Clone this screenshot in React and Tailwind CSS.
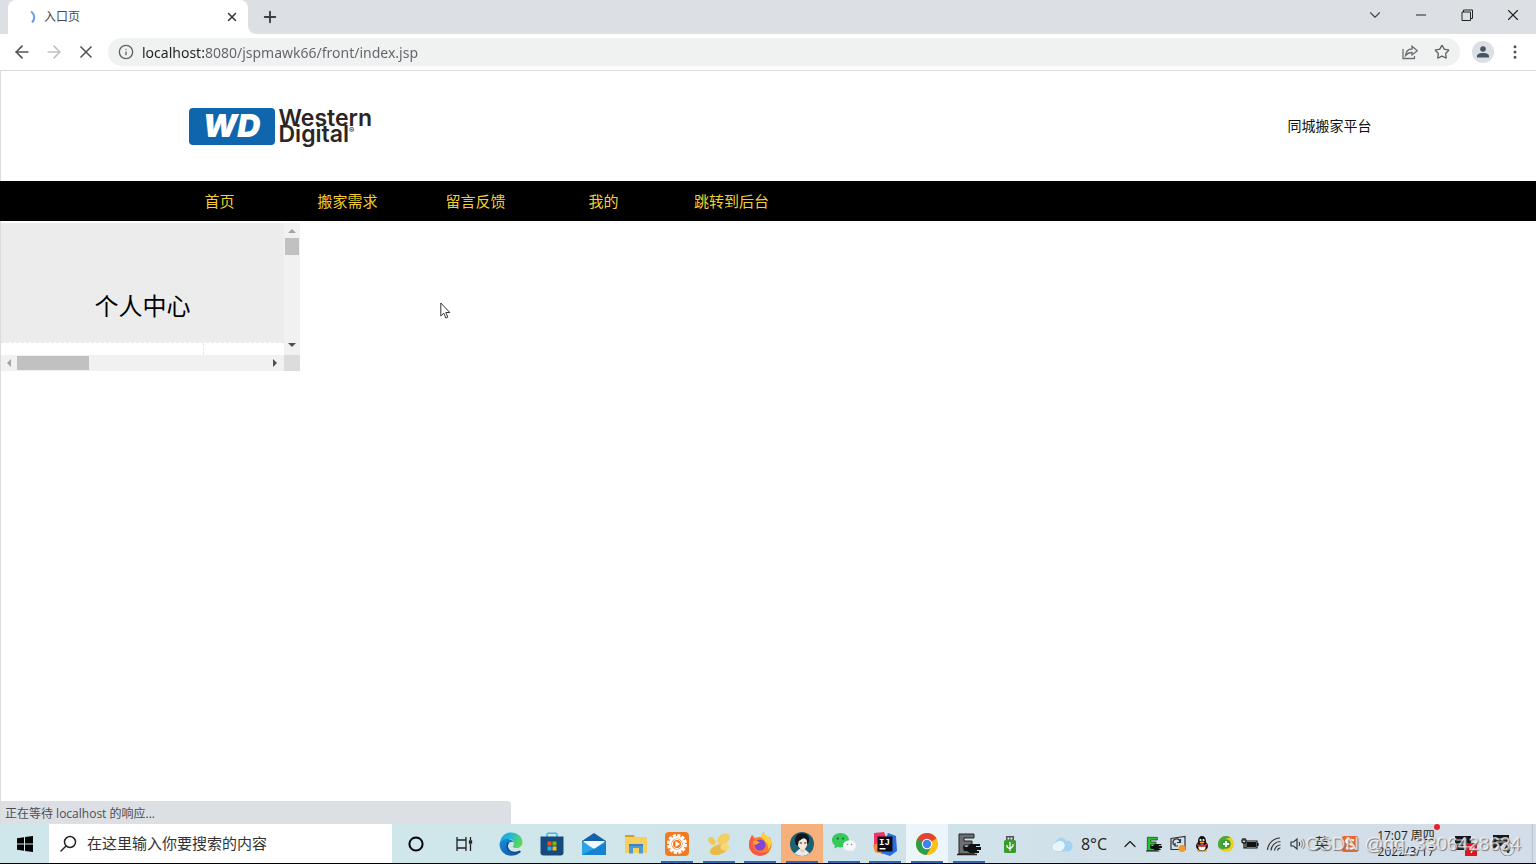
import { ArrowLeft, ArrowRight, X, Info, Star, Plus, Minus, ChevronDown, ChevronUp, EllipsisVertical } from 'lucide-react';

const NAV_ITEMS = ['首页', '搬家需求', '留言反馈', '我的', '跳转到后台'];

function EdgeIcon() {
  return (
    <svg viewBox="0 0 24 24" className="w-6 h-6">
      <defs>
        <linearGradient id="edgeTop" x1="0" y1="0" x2="1" y2="0.4">
          <stop offset="0" stopColor="#1a9fe0" />
          <stop offset="0.5" stopColor="#22b9d6" />
          <stop offset="1" stopColor="#5fd65a" />
        </linearGradient>
        <linearGradient id="edgeBottom" x1="0" y1="0" x2="1" y2="1">
          <stop offset="0" stopColor="#1b8fdc" />
          <stop offset="1" stopColor="#0f4f9e" />
        </linearGradient>
      </defs>
      <path d="M1 11C1.500 5 6 0.500 12 0.500c6.500 0 11.500 4.500 11.500 9.500 0 4-3 6-6 6-2.500 0-3.800-.8-3.800-1.600 0-.7 1.300-1 1.300-3C15 9 12.500 7 9.500 7 5 7 2 9 1 11z" fill="url(#edgeTop)" />
      <path d="M.5 12C1 9 4.500 7 8 7c3.500 0 6 1.500 6.500 3.500-4-1.500-6 1.500-5.500 4.500.6 3.500 4.500 6 8.500 5.200 2-.4 3.500-1.200 4-1.200.8 0 .3 1-.5 1.700C18.500 22.700 15.500 23.700 12 23.700 5.500 23.700.5 18.500.5 12z" fill="url(#edgeBottom)" />
      <path d="M9.500 10.800C7 13 8 19 14 20.300c3 .6 5.800-.6 7-1.100" fill="none" stroke="#134a8e" strokeWidth="1.500" />
    </svg>
  );
}

function StoreIcon() {
  return (
    <svg viewBox="0 0 24 24" className="w-6 h-6">
      <path d="M7 5V2.500Q7 1.200 8.500 1.200H15.500Q17 1.200 17 2.500V5" fill="none" stroke="#3fb4e8" strokeWidth="1.500" />
      <path d="M.5 4.500H23.500V20.500Q23.500 23.500 20.500 23.500H3.500Q.5 23.500.5 20.500z" fill="#174a7c" />
      <path d="M7.500 9.500h4v4h-4z" fill="#f25022" />
      <path d="M12.500 9.500h4v4h-4z" fill="#7fba00" />
      <path d="M7.500 14.500h4v4h-4z" fill="#2ea9f0" />
      <path d="M12.500 14.500h4v4h-4z" fill="#ffb900" />
    </svg>
  );
}

function MailIcon() {
  return (
    <svg viewBox="0 0 24 24" className="w-6 h-6">
      <path d="M0 9L12 1l12 8v4H0z" fill="#1560a8" />
      <path d="M0 9.500l12 6.500 12-6.500V23H0z" fill="#2aa4e6" />
      <path d="M0 23l24-13v13z" fill="#1683d2" />
      <path d="M1.500 9h21v1l-9 6q-1.500 1-3 0l-9-6z" fill="#eefaff" />
    </svg>
  );
}

function FolderIcon() {
  return (
    <svg viewBox="0 0 24 24" className="w-6 h-6">
      <path d="M1 3h8.500l2 2.500H1z" fill="#d79b22" />
      <path d="M1 5h22v16H1z" fill="#f7cf5f" />
      <path d="M5 12h14v9.500h-4V16H9v5.500H5z" fill="#4c9bd6" />
      <path d="M5 12h14v2H5z" fill="#3b82c0" />
    </svg>
  );
}

function SunAppIcon() {
  return (
    <svg viewBox="0 0 24 24" className="w-6 h-6">
      <rect width="24" height="24" rx="4" fill="#f47a1f" />
      <circle cx="12" cy="12" r="8.800" fill="none" stroke="#fff" strokeWidth="2.400" strokeDasharray="3.200 1.400" />
      <circle cx="12" cy="12" r="6.800" fill="none" stroke="#fff" strokeWidth="2.400" />
      <circle cx="12" cy="12" r="4.600" fill="none" stroke="#fff" />
      <path d="M10.500 9l4.500 3-4.500 3z" fill="#fff" />
    </svg>
  );
}

function GoldIcon() {
  return (
    <svg viewBox="0 0 24 24" className="w-6 h-6">
      <ellipse cx="5" cy="9" rx="4.500" ry="3" transform="rotate(50 5 9)" fill="#efc858" />
      <ellipse cx="16.500" cy="7" rx="7" ry="5" transform="rotate(-35 16.500 7)" fill="#f3cf63" />
      <ellipse cx="12" cy="17.500" rx="9.500" ry="5" transform="rotate(-18 12 17.500)" fill="#e8bb48" />
      <ellipse cx="18" cy="15" rx="4.500" ry="3.500" fill="#f6d878" />
    </svg>
  );
}

function FirefoxIcon() {
  return (
    <svg viewBox="0 0 24 24" className="w-6 h-6">
      <path d="M1 13C1 8 3 6 4 3l3 3c2-1 4-1 6-1 0-2 1-3.500 3-5 0 3 3 4 5 6l.5-1.500C23 7 23.500 10 23.500 13c0 6-5 10.700-11.300 10.700S1 19 1 13z" fill="#ff7b2e" />
      <path d="M13 5c0-2 1-3.500 3-5 0 3 3 4 5 6l.5-1.500C23.500 8 24 14 20 18c1-6-3-9-7-13z" fill="#ffd23c" />
      <path d="M1 13c0 6 5 10.700 11.200 10.700 4 0 7.500-2 9.500-5-6 4-16 2-17-6-.3-2 .3-4 1-5L4 3C3 6 1 8 1 13z" fill="#f9574a" />
      <circle cx="12" cy="13" r="5.500" fill="#8146d8" />
      <path d="M5 9c3-1 5 0 7 2-2 0-3 1-4 2-2-1-3-2-3-4z" fill="#ffa52e" />
    </svg>
  );
}

function AvatarIcon() {
  return (
    <svg viewBox="0 0 24 24" className="w-6 h-6">
      <circle cx="12" cy="12" r="12" fill="#1b6173" />
      <path d="M4.500 21.300l5-4.300h5l5 4.300A12 12 0 0 1 4.500 21.300z" fill="#dff0f3" />
      <path d="M10 14h5v4.500L12.500 21 10 18.500z" fill="#e8cdbd" />
      <path d="M7.500 6.500h10V12q-1.500 5-4.500 6-4.500-1.500-5.500-6z" fill="#f8e5d9" />
      <path d="M5.500 12C3.500 5 7 1.500 12 1.200c6 0 8.500 4 6.500 9.300L17.300 13l-.6-5L14 5.500 10.500 8l-1.700 1L7.800 14z" fill="#11161c" />
      <path d="M9.800 11h2M14.300 11h2" stroke="#11161c" />
    </svg>
  );
}

function WechatIcon() {
  return (
    <svg viewBox="0 0 24 24" className="w-6 h-6">
      <path d="M8.500 1C3.800 1 0 4 0 8.200c0 2 1 3.700 2.700 5L2.500 16.500l3-1.500c6 1.500 11.500-1.500 11.500-7C17 4 13 1 8.500 1z" fill="#37c95b" />
      <ellipse cx="17.500" cy="13.500" rx="6.500" ry="5.300" fill="#f5f8f8" />
      <path d="M20 17.500l2 3-.3-4z" fill="#f5f8f8" />
      <circle cx="5.800" cy="6.500" r="1" fill="#14632a" />
      <circle cx="11" cy="6.500" r="1" fill="#14632a" />
      <circle cx="15.500" cy="12.500" r=".8" fill="#888" />
      <circle cx="19.500" cy="12.500" r=".8" fill="#888" />
    </svg>
  );
}

function IdeaIcon() {
  return (
    <svg viewBox="0 0 24 24" className="w-6 h-6">
      <path d="M1 1l10-1 4 10-8 10-6-5z" fill="#f0356b" />
      <path d="M0 13l8-3 2 12-8-2z" fill="#f58a3a" />
      <path d="M15 1l8 3 1 15-7 5-9-3z" fill="#2b6be4" />
      <rect x="4.500" y="4.500" width="15" height="15" fill="#0b0b0d" />
      <text x="6" y="12.500" fontSize="9" fontWeight="700" fontFamily="Liberation Mono, monospace" fill="#fff">IJ</text>
      <path d="M6.500 16h6v1.500h-6z" fill="#fff" />
    </svg>
  );
}

function ChromeIcon() {
  return (
    <svg viewBox="0 0 24 24" className="w-6 h-6">
      <circle cx="12" cy="12" r="11" fill="#fbc116" />
      <path d="M12 12L2.500 6.500A11 11 0 0 1 21.500 6.500z" fill="#df4435" />
      <path d="M2.500 6.500A11 11 0 0 0 11.500 23L16.500 14.600 12 12z" fill="#2a9d4e" />
      <path d="M2.500 6.500L7.500 14.500 12 6.500z" fill="#df4435" />
      <path d="M2.500 6.500L7.300 14.700 12 12z" fill="#2a9d4e" />
      <circle cx="12" cy="12" r="5.200" fill="#fff" />
      <circle cx="12" cy="12" r="4.200" fill="#3f83ee" />
    </svg>
  );
}

function RecorderIcon({ color = '#6b6f73', className = 'w-6 h-6' }) {
  return (
    <svg viewBox="0 0 24 24" className={className}>
      <path d="M2 2h15v4H7v3h8v4H7v5h10v4H2z" fill={color} stroke="#222" />
      <path d="M0 22.500h20" stroke="#222" strokeWidth="1.500" />
      <path d="M6 14l4 1 3-3h10v2h-4v1h5v3h-4v1h2v2h-9l-3-2H7z" fill="#111" />
    </svg>
  );
}

function UsbIcon() {
  return (
    <svg viewBox="0 0 24 24" className="w-6 h-6">
      <path d="M8 4h8v5H8z" fill="#4b5358" />
      <path d="M9.500 5.500h2v2h-2zM12.500 5.500h2v2h-2z" fill="#e5e9eb" />
      <rect x="6" y="8" width="12" height="13" rx="1.500" fill="#3b9a2c" />
      <path d="M12 10v9M9 13v2l3 2 3-3v-2" fill="none" stroke="#fff" strokeWidth="1.200" />
    </svg>
  );
}

const TASKBAR_APPS = [
  { name: 'Edge', icon: EdgeIcon },
  { name: 'Store', icon: StoreIcon },
  { name: 'Mail', icon: MailIcon },
  { name: 'Explorer', icon: FolderIcon },
  { name: 'Sunflower', icon: SunAppIcon, open: true },
  { name: 'Navicat', icon: GoldIcon, open: true },
  { name: 'Firefox', icon: FirefoxIcon, open: true },
  { name: 'Profile', icon: AvatarIcon, open: true, bg: 'bg-[#f5b07c]' },
  { name: 'WeChat', icon: WechatIcon, open: true },
  { name: 'IntelliJ IDEA', icon: IdeaIcon, open: true },
  { name: 'Chrome', icon: ChromeIcon, open: true, bg: 'bg-[#ecf5f9]' },
  { name: 'Recorder', icon: RecorderIcon, open: true },
  { name: 'USB', icon: UsbIcon },
];

function BrowserTabs() {
  return (
    <div className="flex h-[34px] shrink-0 bg-[#dcdfe4]">
      <div className="ml-2 flex w-60 items-center rounded-t-lg bg-white pl-5 pr-2">
        <svg viewBox="0 0 16 16" className="w-4 h-4 shrink-0">
          <path d="M3 2.500A7 7 0 0 1 4 13.500" fill="none" stroke="#6f9ee8" strokeWidth="2" />
        </svg>
        <span className="flex-1 text-xs text-[#45494d]">入口页</span>
        <button aria-label="Close tab" className="flex w-4 h-4 items-center justify-center">
          <X size={14} strokeWidth={2.5} color="#33373b" />
        </button>
      </div>
      <svg viewBox="0 0 8 8" className="w-2 h-2 self-end">
        <path d="M0 0v8h8A8 8 0 0 1 0 0z" fill="#fff" />
      </svg>
      <button aria-label="New tab" className="ml-1 flex w-5 items-center justify-center">
        <Plus size={18} strokeWidth={2.5} color="#3a3e42" className="shrink-0" />
      </button>
      <div className="ml-auto flex h-[30px]">
        <button aria-label="Search tabs" className="flex w-[46px] items-center justify-center">
          <ChevronDown size={18} strokeWidth={1.5} color="#44484c" />
        </button>
        <button aria-label="Minimize" className="flex w-[46px] items-center justify-center">
          <Minus size={16} strokeWidth={1.5} color="#222" />
        </button>
        <button aria-label="Restore" className="flex w-[46px] items-center justify-center">
          <svg viewBox="0 0 12 12" className="w-3 h-3" fill="none" stroke="#222">
            <path d="M1 3h8.500v8.500H1zM2.500 3V1h9v8.500h-2" />
          </svg>
        </button>
        <button aria-label="Close" className="flex w-[46px] items-center justify-center">
          <X size={18} strokeWidth={1.5} color="#222" />
        </button>
      </div>
    </div>
  );
}

function Toolbar() {
  return (
    <div className="flex h-[37px] shrink-0 items-center border-b border-[#d9dbdd] bg-white pl-3">
      <button aria-label="Back" className="w-8"><ArrowLeft size={20} strokeWidth={2} color="#505458" /></button>
      <button aria-label="Forward" className="w-8"><ArrowRight size={20} strokeWidth={2} color="#bfc1c4" /></button>
      <button aria-label="Stop" className="w-8"><X size={20} strokeWidth={2} color="#505458" /></button>
      <div className="flex h-7 flex-1 items-center rounded-full bg-[#f0f2f2] pl-[10px] pr-2">
        <Info size={16} strokeWidth={2} color="#5f6368" className="shrink-0" />
        <input
          type="text"
          aria-label="Address"
          defaultValue="localhost:8080/jspmawk66/front/index.jsp"
          className="ml-2 min-w-0 flex-1 bg-[linear-gradient(to_right,#202124_62px,#5f6368_62px)] bg-clip-text font-['Noto_Sans'] text-[14px] text-transparent outline-none"
        />
        <button aria-label="Share" className="mr-3 p-0.5">
          <svg viewBox="0 0 16 16" className="w-4 h-4" fill="none" stroke="#6c7074" strokeWidth="1.300">
            <path d="M1 5v9.500h11.500V12" />
            <path d="M3.500 11.500C4 7.500 6.500 5 10 5V2.200L15.300 6.800 10 11V8.500C7.500 8.500 5.500 9 3.500 11.500z" />
          </svg>
        </button>
        <button aria-label="Bookmark" className="p-0.5">
          <Star size={16} strokeWidth={2} color="#5f6368" />
        </button>
      </div>
      <button aria-label="Profile" className="ml-3 flex h-[22px] w-[22px] items-center justify-center rounded-full bg-[#dcdfe6]">
        <svg viewBox="0 0 14 14" className="w-[14px] h-[14px]" fill="#4a5563">
          <circle cx="7" cy="4" r="2.800" />
          <path d="M1 12.500V11C1 8.500 5 8 7 8s6 .5 6 3v1.500z" />
        </svg>
      </button>
      <button aria-label="Menu" className="ml-3 mr-3">
        <EllipsisVertical size={18} strokeWidth={2} color="#505458" />
      </button>
    </div>
  );
}

function SiteHeader() {
  return (
    <header className="flex h-[110px] shrink-0 items-center">
      <div className="mx-auto flex w-4/5 items-center justify-between pl-[34px] pr-[11px]">
        <a href="#home" className="flex items-center gap-1">
          <span className="flex h-[37px] w-[86px] items-center justify-center rounded bg-[#0f66ad] font-['Inter'] text-[32px] font-black italic leading-none text-white">
            WD
          </span>
          <span className="font-['Inter'] text-[23px] font-semibold leading-4 text-[#2b2624]">
            Western
            <br />
            Digital<span className="align-super text-[8px] leading-none">®</span>
          </span>
        </a>
        <span className="text-sm text-[#111]">同城搬家平台</span>
      </div>
    </header>
  );
}

function SiteNav() {
  return (
    <nav className="h-10 shrink-0 bg-black">
      <div className="mx-auto flex h-full w-4/5 items-center pl-0.5">
        {NAV_ITEMS.map((item) => (
          <a key={item} href="#nav" className="w-32 text-center text-[15px] text-[#f5cf2f]">
            {item}
          </a>
        ))}
      </div>
    </nav>
  );
}

function ScrollArrow({ d, color }) {
  return (
    <svg viewBox="0 0 8 8" className="w-2 h-2 shrink-0" fill={color}>
      <path d={d} />
    </svg>
  );
}

function SidePanel() {
  return (
    <aside className="mt-0.5 w-[299px]">
      <div className="flex h-[132px]">
        <div className="flex flex-1 flex-col">
          <h2 className="flex-1 bg-[#ececec] pt-[67px] text-center text-2xl text-black">个人中心</h2>
          <div className="flex h-[13px] border-t border-dashed border-[#e8e8e8]">
            <div className="w-[203px] border-r border-dashed border-[#e8e8e8]" />
          </div>
        </div>
        {/* vertical scrollbar */}
        <div className="flex w-4 flex-col items-center bg-[#f1f1f1] pt-1 pb-1.5">
          <ScrollArrow d="M0 6l4-4 4 4z" color="#a3a3a3" />
          <div className="mt-[3px] h-[17px] w-[14px] bg-[#c1c1c1]" />
          <div className="mt-auto"><ScrollArrow d="M0 2l4 4 4-4z" color="#505050" /></div>
        </div>
      </div>
      {/* horizontal scrollbar */}
      <div className="flex h-4">
        <div className="flex flex-1 items-center bg-[#f1f1f1] pl-1 pr-[5px]">
          <ScrollArrow d="M6 0L2 4l4 4z" color="#a3a3a3" />
          <div className="ml-1 h-[14px] w-[72px] bg-[#c1c1c1]" />
          <div className="ml-auto"><ScrollArrow d="M2 0l4 4-4 4z" color="#505050" /></div>
        </div>
        <div className="w-4 bg-[#dcdcdc]" />
      </div>
    </aside>
  );
}

function Tray() {
  return (
    <div className="ml-auto flex h-full items-center">
      <button className="flex items-center gap-2 text-base text-[#222]">
        <svg viewBox="0 0 22 16" className="w-[22px] h-4">
          <path d="M5 15.500a4.500 4.500 0 0 1-.5-9C6 1 13 0 15 5c4-1 6.500 2 6.500 5s-2 5.500-5 5.500z" fill="#a3d2f2" />
          <path d="M5 15a4 4 0 0 1 0-8c2-3 6-3 8 0 2 3 0 6-3 8z" fill="#e7f5fd" />
        </svg>
        <span>8°C</span>
      </button>
      <div className="ml-[11px] flex items-center">
        <button aria-label="Show hidden icons" className="flex w-6 justify-center">
          <ChevronUp size={20} strokeWidth={1.5} color="#222" />
        </button>
        <span className="flex w-6 justify-center"><RecorderIcon color="#22c62f" className="w-4 h-4" /></span>
        <span className="flex w-6 justify-center">
          <svg viewBox="0 0 18 18" className="w-[18px] h-[18px]" fill="none" stroke="#2d3134" strokeWidth="1.200">
            <path d="M2 3.500L16 1.500V14.500L2 14.500z" />
            <path d="M6 10.500a3.500 3.500 0 1 1 5-3M11.500 4v3.500H8M6 8v3h3" />
            <circle cx="13" cy="13.500" r="3.500" fill="#f59a23" stroke="none" />
          </svg>
        </span>
        <span className="flex w-6 justify-center">
          <svg viewBox="0 0 16 16" className="w-4 h-4">
            <ellipse cx="8" cy="14.500" rx="5" ry="1.500" fill="#f5a623" />
            <ellipse cx="8" cy="10" rx="6" ry="5" fill="#111" />
            <ellipse cx="8" cy="5" rx="4" ry="5" fill="#111" />
            <ellipse cx="8" cy="11.500" rx="3.500" ry="3" fill="#fff" />
            <path d="M3 7.500q5 3 10 0v2q-5 3-10 0z" fill="#e0252a" />
            <circle cx="6.500" cy="4" r="1.100" fill="#fff" />
            <circle cx="9.500" cy="4" r="1.100" fill="#fff" />
            <ellipse cx="8" cy="6.500" rx="2.500" ry="1" fill="#f5a623" />
          </svg>
        </span>
        <span className="flex w-6 justify-center">
          <svg viewBox="0 0 16 16" className="w-4 h-4">
            <circle cx="8" cy="8" r="8" fill="#f3cf1c" />
            <path d="M1 12A8 8 0 0 1 13 1.800C9 2 5 3 4 8c0 2 1 4 3 5-2 1-4 0-6-1z" fill="#43a83e" />
            <circle cx="8" cy="8" r="4.800" fill="#35a038" />
            <path d="M8 5v6M5 8h6" stroke="#fff" strokeWidth="1.800" />
          </svg>
        </span>
        <span className="flex w-6 justify-center">
          <svg viewBox="0 0 18 14" className="w-[18px] h-[14px]" fill="none" stroke="#111" strokeWidth="1.200">
            <path d="M5 4h11v7H5zM17 6v3M2 1v2M4 1v2M1 3h4v2q-2 2-4 0zM3 6v5h2" />
            <path d="M6.500 5.500h8v4h-8z" fill="#111" />
          </svg>
        </span>
        <span className="flex w-6 justify-center">
          <svg viewBox="0 0 16 16" className="w-4 h-4" fill="none" stroke="#333" strokeWidth="1.200">
            <path d="M1.500 14A13 13 0 0 1 14 2M5 14.500A9.500 9.500 0 0 1 14.500 5.500M8.500 14.500A6 6 0 0 1 14.500 9M11.500 14.500a3 3 0 0 1 3-2.500" />
          </svg>
        </span>
        <span className="flex w-6 justify-center">
          <svg viewBox="0 0 16 16" className="w-4 h-4" fill="none" stroke="#333" strokeWidth="1.200">
            <path d="M1 6h2.500L7 3v10L3.500 10H1z" />
            <path d="M9 6q1.500 2 0 4" />
            <path d="M11 4.500q3 3.500 0 7M13 3q4 5 0 10" stroke="#999" />
          </svg>
        </span>
        <span className="flex w-6 justify-center text-[15px] text-[#333]">英</span>
        <span className="ml-1 flex w-6 justify-center">
          <svg viewBox="0 0 16 16" className="w-4 h-4">
            <rect width="16" height="16" rx="2" fill="#ee6431" />
            <path d="M12 4.500Q4 2 4 5.500C4 8 12 8 12 10.500S7 13 4 11.500" fill="none" stroke="#fff" strokeWidth="2" />
          </svg>
        </span>
      </div>
      <div className="relative ml-3 mr-1 w-[64px] text-center text-xs leading-4 text-[#1b1f23]">
        <div className="whitespace-nowrap">17:07 周四</div>
        <div className="whitespace-nowrap">2022/3/17</div>
        <span className="absolute -right-0.5 -top-1 h-1.5 w-1.5 rounded-full bg-[#e8202a]" />
      </div>
      <button aria-label="Input mode" className="ml-3 w-6">
        <svg viewBox="0 0 24 24" className="w-6 h-6">
          <path d="M1 4h16v14H1z" fill="#15171a" />
          <path d="M3 8h6M3 12h12M10 6v10" stroke="#d3dfe8" strokeWidth="1.200" />
          <path d="M11 11h12v13H11z" fill="#e3121b" />
          <path d="M14 15h6l-3 6" fill="none" stroke="#fff" strokeWidth="1.200" />
        </svg>
      </button>
      <button aria-label="Notifications" className="relative ml-[14px] mr-2 h-6 w-6">
        <svg viewBox="0 0 24 24" className="w-6 h-6">
          <path d="M1 3h16v11H5l-4 4z" fill="#15171a" />
          <path d="M4 7h10M4 10h10" stroke="#d3dfe8" strokeWidth="1.200" />
          <circle cx="15.500" cy="17" r="7" fill="#dbe3ea" stroke="#878c91" />
        </svg>
        <span className="absolute bottom-px right-1.5 text-xs font-bold leading-3 text-[#111]">4</span>
      </button>
      <div className="ml-2 h-full w-1 border-l border-[#b9c5cd]" />
    </div>
  );
}

function Taskbar() {
  return (
    <footer className="relative flex h-10 shrink-0 items-center border-b border-black bg-linear-to-r from-[#cfe6eb] from-40% to-[#d3dce8]">
      <button aria-label="Start" className="flex w-[49px] justify-center">
        <svg viewBox="0 0 16 16" className="w-4 h-4" fill="#000">
          <path d="M0 2.200L7 1.200V7.600H0zM8 1L16 0V7.600H8zM0 8.500H7V14.800L0 13.800zM8 8.500H16V16L8 15z" />
        </svg>
      </button>
      <label className="flex h-full w-[343px] items-center gap-2.5 bg-white pl-2.5">
        <svg viewBox="0 0 18 18" className="w-[18px] h-[18px] shrink-0" fill="none" stroke="#222" strokeWidth="1.500">
          <circle cx="11" cy="7" r="5.500" />
          <path d="M7 11L1.500 16.500" />
        </svg>
        <input
          type="text"
          aria-label="搜索"
          placeholder="在这里输入你要搜索的内容"
          className="min-w-0 flex-1 text-[15px] outline-none placeholder:text-[#333]"
        />
      </label>
      <button aria-label="Cortana" className="flex w-12 justify-center">
        <svg viewBox="0 0 16 16" className="w-4 h-4">
          <circle cx="8" cy="8" r="6.600" fill="none" stroke="#000" strokeWidth="2" />
        </svg>
      </button>
      <button aria-label="Task view" className="flex w-12 justify-center">
        <svg viewBox="0 0 18 16" className="w-[18px] h-4" fill="none" stroke="#222" strokeWidth="1.300">
          <path d="M2 1v3h9V1M2 15v-3h9v3M2 4v8M11 4v8M15.500 1v3M15.500 8v7" />
          <path d="M14.500 5h2v2h-2z" fill="#222" />
        </svg>
      </button>
      <div className="ml-0.5 grid h-full w-[541px] grid-cols-13">
        {TASKBAR_APPS.map(({ name, icon: Icon, open, bg }) => (
          <button key={name} aria-label={name} className={`flex flex-col items-center ${bg || ''}`}>
            <span className="flex flex-1 items-center"><Icon /></span>
            <span className={`-mt-0.5 h-0.5 w-8 ${open ? 'bg-[#2f68a8]' : ''}`} />
          </button>
        ))}
      </div>
      <Tray />
      <span className="pointer-events-none absolute right-[15px] top-2 font-['Liberation_Sans'] text-[19px] leading-6 text-white/70 [text-shadow:1px_1px_1px_#777]">
        CSDN @qq_3306428634
      </span>
    </footer>
  );
}

export default function App() {
  return (
    <div className="flex h-screen flex-col overflow-hidden bg-white font-['Open_Sans','Noto_Sans_CJK_SC',sans-serif]">
      <BrowserTabs />
      <Toolbar />
      <main className="relative flex min-h-0 flex-1 flex-col border-l border-[#dcdcdc]">
        <SiteHeader />
        <div className="-ml-px flex flex-col">
          <SiteNav />
        </div>
        <SidePanel />
        {/* mouse pointer */}
        <svg viewBox="0 0 12 18" className="absolute left-[439px] top-[231px] h-[18px] w-3" fill="#fff" stroke="#333">
          <path d="M.8 1v13l3-2.800 2 4.800 2-.9-2-4.600h4z" />
        </svg>
        <div className="absolute bottom-0 left-0 flex h-[23px] w-[510px] items-center rounded-tr bg-[#dcdfe4] pl-1 pt-0.5 text-xs text-[#4b4f54]">
          正在等待 localhost 的响应...
        </div>
      </main>
      <Taskbar />
    </div>
  );
}
